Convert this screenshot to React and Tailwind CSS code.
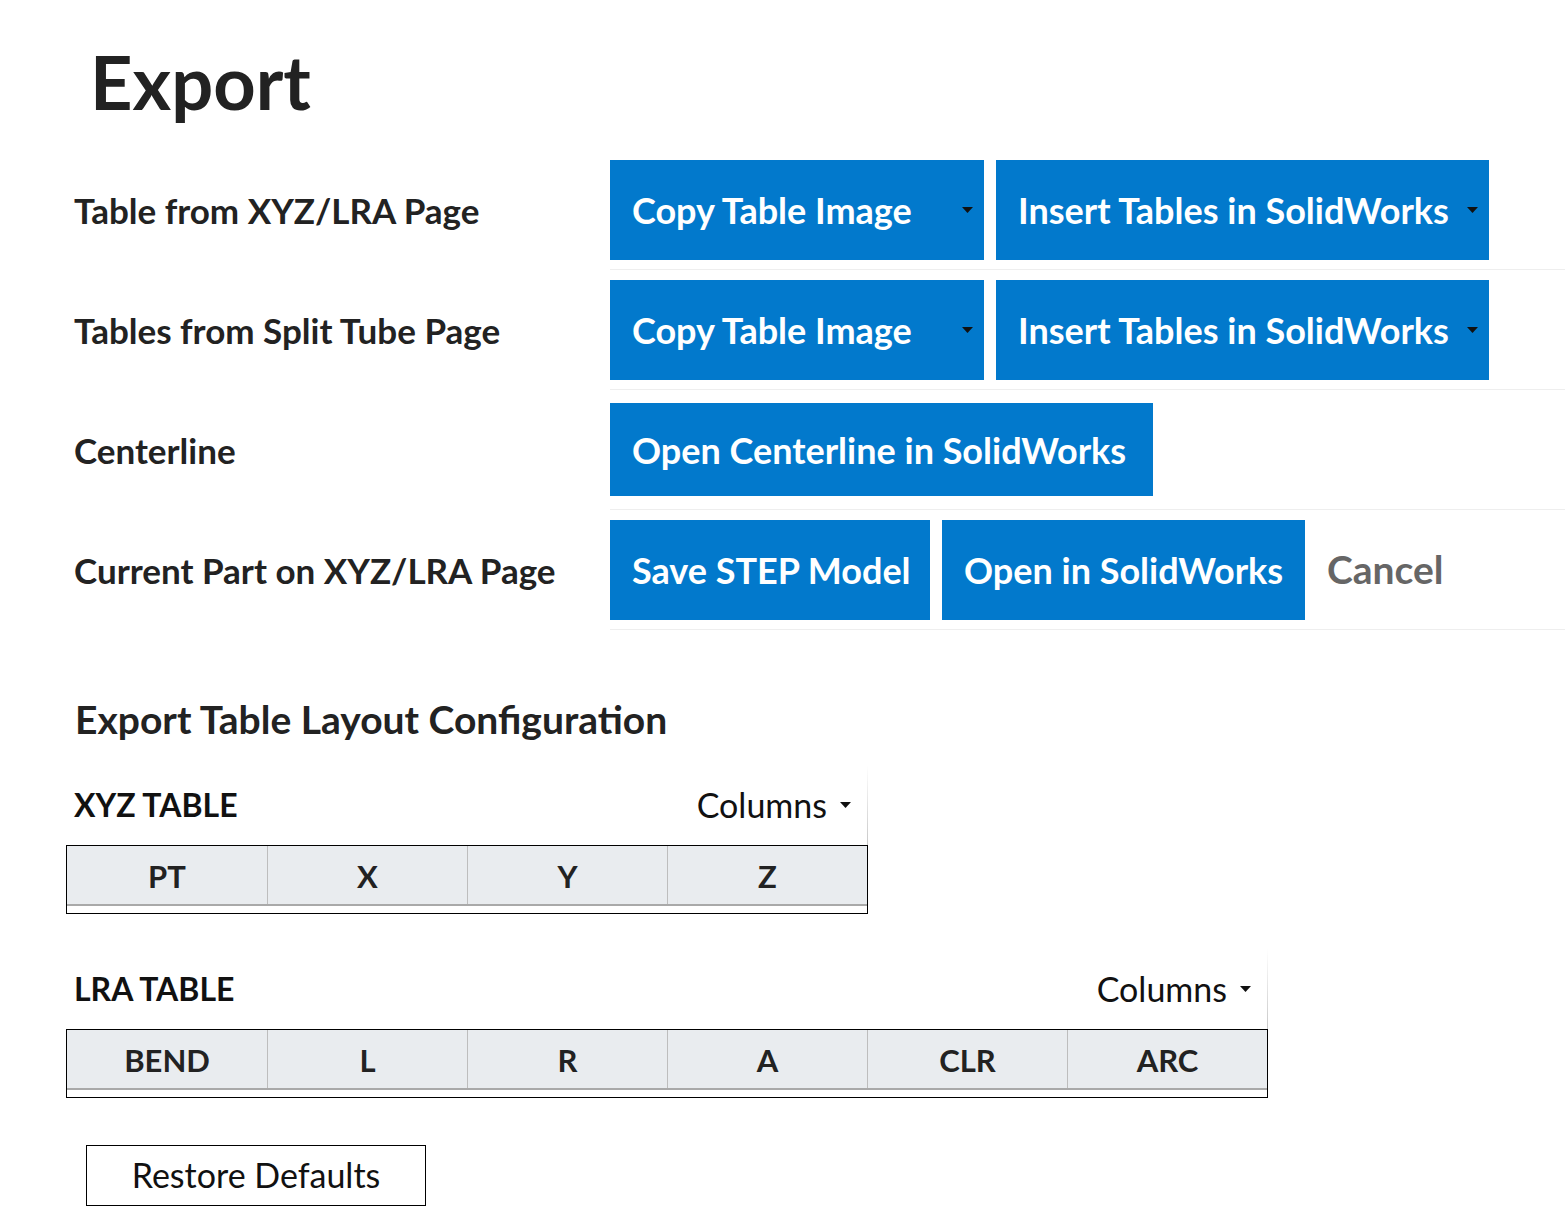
import React from 'react';

function Caret({ className = '' }) {
  return (
    <svg width="11" height="6" viewBox="0 0 11 6" className={className}>
      <path d="M0 0h11L5.5 6z" fill="#111" />
    </svg>
  );
}

function BlueButton({ label, width, dropdown }) {
  return (
    <button
      type="button"
      className={`flex items-center h-[100px] pl-[22px] pr-[11px] bg-[#0279cc] text-white text-[36px] font-bold leading-none ${width}`}
    >
      <span className="flex-1 text-left whitespace-nowrap">{label}</span>
      {dropdown && <Caret />}
    </button>
  );
}

function ExportRow({ label, children }) {
  return (
    <div className="grid grid-cols-[544px_1fr]">
      <div className="flex items-center pl-2 text-[35px] font-bold text-[#222] whitespace-nowrap">{label}</div>
      <div className="flex items-center gap-3 h-[120px] border-b border-[#eeeeee]">{children}</div>
    </div>
  );
}

function LayoutTable({ title, columns, width, cols }) {
  return (
    <div className={width}>
      <div className="flex items-stretch h-[80px]">
        <div className="flex-1 flex items-center justify-between pl-2 pr-[16px]">
          <span className="text-[32px] font-bold text-[#111]">{title}</span>
          <span className="flex items-center gap-[13px] text-[34px] text-[#111]">
            Columns
            <Caret />
          </span>
        </div>
        <div className="w-px bg-gradient-to-b from-white to-[#c8c8c8]" />
      </div>
      <div className="border border-black">
        <div className={`grid ${cols} bg-[#e9ecef] border-b-2 border-[#a9a9a9]`}>
          {columns.map((c, i) => (
            <div
              key={c}
              className={`flex items-center justify-center h-[58px] pt-[3px] text-[31px] font-bold text-[#222] ${i > 0 ? 'border-l border-[#bdbdbd]' : ''}`}
            >
              {c}
            </div>
          ))}
        </div>
        <div className="h-[7px]" />
      </div>
    </div>
  );
}

export default function App() {
  return (
    <div className="min-h-screen bg-white pl-[66px] pt-[45px] pb-10 font-['Lato',sans-serif]">
      <h1 className="pl-[24px] text-[74px] font-bold leading-none text-[#222]">Export</h1>

      <div className="mt-[31px]">
        <ExportRow label="Table from XYZ/LRA Page">
          <BlueButton label="Copy Table Image" width="w-[374px]" dropdown />
          <BlueButton label="Insert Tables in SolidWorks" width="w-[493px]" dropdown />
        </ExportRow>
        <ExportRow label="Tables from Split Tube Page">
          <BlueButton label="Copy Table Image" width="w-[374px]" dropdown />
          <BlueButton label="Insert Tables in SolidWorks" width="w-[493px]" dropdown />
        </ExportRow>
        <ExportRow label="Centerline">
          <button
            type="button"
            className="flex items-center h-[93px] w-[543px] pl-[22px] bg-[#0279cc] text-white text-[36px] font-bold leading-none whitespace-nowrap"
          >
            Open Centerline in SolidWorks
          </button>
        </ExportRow>
        <ExportRow label="Current Part on XYZ/LRA Page">
          <BlueButton label="Save STEP Model" width="w-[320px]" />
          <BlueButton label="Open in SolidWorks" width="w-[363px]" />
          <button type="button" className="ml-[10px] text-[39px] font-bold text-[#666] leading-none">
            Cancel
          </button>
        </ExportRow>
      </div>

      <h2 className="mt-[66px] pl-[9px] text-[39px] font-bold leading-[1.2] text-[#222]">
        Export Table Layout Configuration
      </h2>

      <div className="mt-[22px]">
        <LayoutTable title="XYZ TABLE" columns={['PT', 'X', 'Y', 'Z']} width="w-[802px]" cols="grid-cols-4" />
      </div>
      <div className="mt-[35px]">
        <LayoutTable
          title="LRA TABLE"
          columns={['BEND', 'L', 'R', 'A', 'CLR', 'ARC']}
          width="w-[1202px]"
          cols="grid-cols-6"
        />
      </div>

      <button
        type="button"
        className="mt-[47px] ml-[20px] w-[340px] h-[61px] border border-black text-[34px] text-[#111] leading-none"
      >
        Restore Defaults
      </button>
    </div>
  );
}
